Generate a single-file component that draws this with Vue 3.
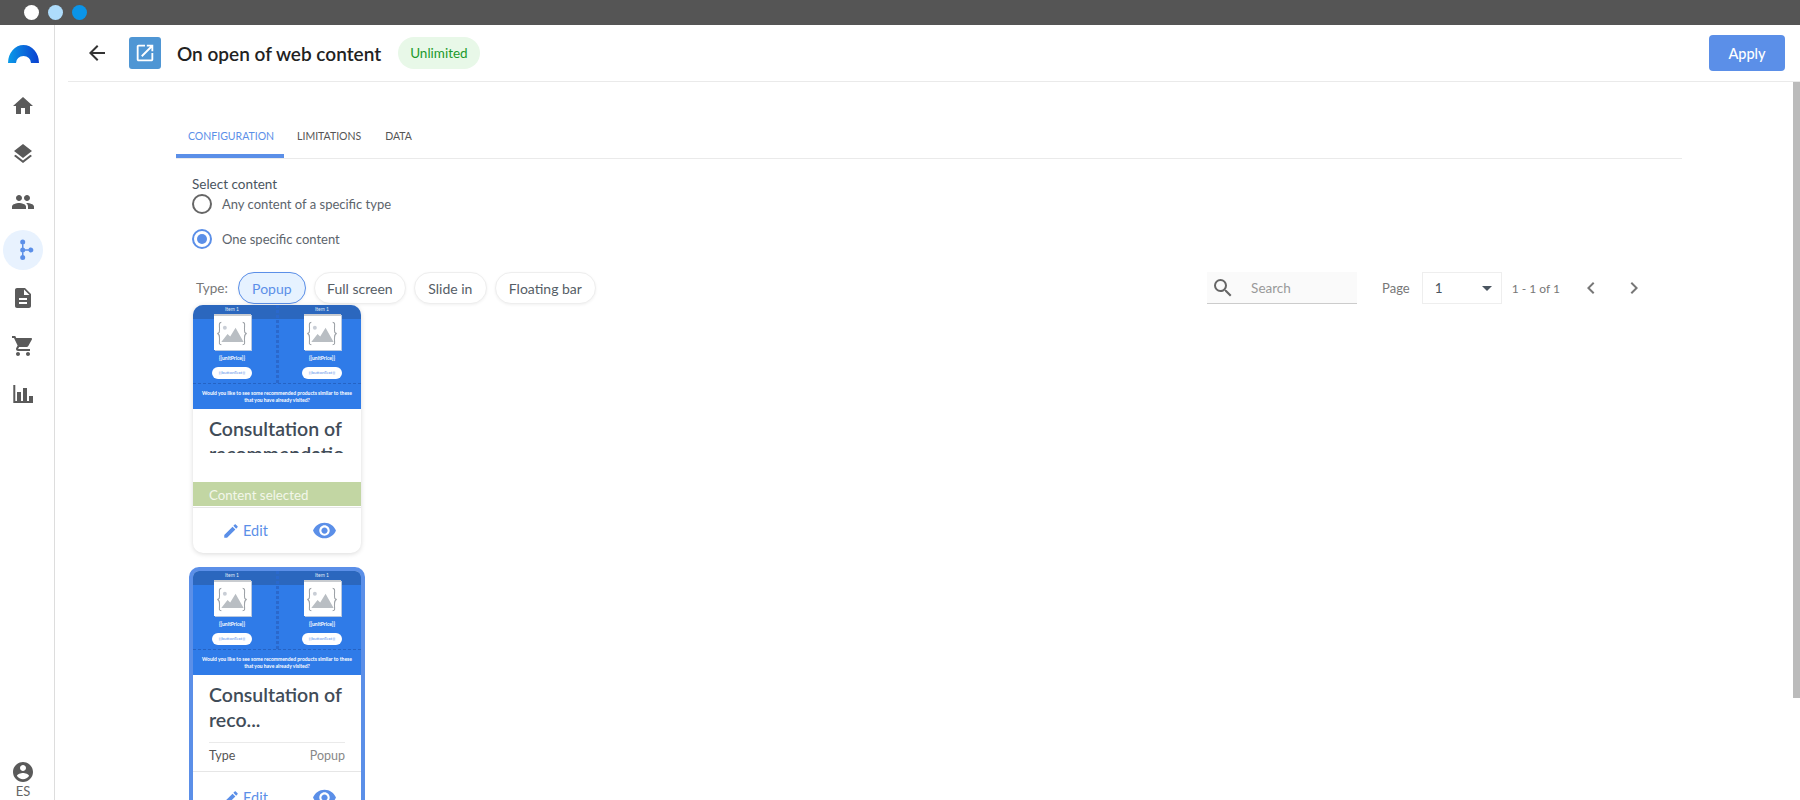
<script setup>
import { ref } from "vue";

const navItems = ref([
  { id: "home", d: "M10 20v-6h4v6h5v-8h3L12 3 2 12h3v8z" },
  { id: "layers", d: "M11.99 18.54l-7.37-5.73L3 14.07l9 7 9-7-1.63-1.27-7.38 5.74zM12 16l7.36-5.73L21 9l-9-7-9 7 1.63 1.27L12 16z" },
  { id: "people", d: "M16 11c1.66 0 2.99-1.34 2.99-3S17.66 5 16 5c-1.66 0-3 1.34-3 3s1.34 3 3 3zm-8 0c1.66 0 2.99-1.34 2.99-3S9.66 5 8 5C6.34 5 5 6.34 5 8s1.34 3 3 3zm0 2c-2.33 0-7 1.17-7 3.5V19h14v-2.5c0-2.33-4.67-3.5-7-3.5zm8 0c-.29 0-.62.02-.97.05 1.16.84 1.97 1.97 1.97 3.45V19h6v-2.5c0-2.33-4.67-3.5-7-3.5z" },
  { id: "flow", active: true, d: "M11 4h1.500v7.200h5a2.500 2.500 0 1 1 0 1.600h-5V19H11zM11.700 1.500a2.500 2.500 0 1 1 0 5 2.500 2.500 0 0 1 0-5zM11.700 9.500a2.500 2.500 0 1 1 0 5 2.500 2.500 0 0 1 0-5zM11.700 17a2.500 2.500 0 1 1 0 5 2.500 2.500 0 0 1 0-5z" },
  { id: "doc", d: "M14 2H6c-1.1 0-1.99.9-1.99 2L4 20c0 1.1.89 2 1.99 2H18c1.1 0 2-.9 2-2V8l-6-6zm2 16H8v-2h8v2zm0-4H8v-2h8v2zm-3-5V3.5L18.5 9H13z" },
  { id: "cart", d: "M7 18c-1.1 0-1.99.9-1.99 2S5.9 22 7 22s2-.9 2-2-.9-2-2-2zM1 2v2h2l3.6 7.59-1.35 2.45c-.16.28-.25.61-.25.96 0 1.1.9 2 2 2h12v-2H7.42c-.14 0-.25-.11-.25-.25l.03-.12.9-1.63h7.45c.75 0 1.41-.41 1.75-1.03l3.58-6.49c.08-.14.12-.31.12-.48 0-.55-.45-1-1-1H5.21l-.94-2H1zm16 16c-1.1 0-1.99.9-1.99 2s.89 2 1.99 2 2-.9 2-2-.9-2-2-2z" },
  { id: "chart", d: "M2.300 3h2v16H6v-9h4v9h2V6h4v13h2v-5h4v7H2.300z" },
]);

const tabs = ["CONFIGURATION", "LIMITATIONS", "DATA"];
const types = ["Popup", "Full screen", "Slide in", "Floating bar"];
const selectedType = ref("Popup");
const selectedMode = ref("one");

const cards = ref([
  { id: 1, selected: false, clipped: true, title: "Consultation of recommendations" },
  { id: 2, selected: true, clipped: false, title: "Consultation of reco..." },
]);
</script>

<template>
  <div class="page">
    <div class="window-bar">
      <span class="dot white"></span>
      <span class="dot light"></span>
      <span class="dot blue"></span>
    </div>

    <div class="layout">
      <aside class="sidebar">
        <svg class="logo" viewBox="0 0 31 18" width="31" height="18">
          <defs>
            <linearGradient id="logoGrad" x1="0" x2="1" y1="0" y2="0">
              <stop offset="0" stop-color="#0a9be8" />
              <stop offset="1" stop-color="#0b3fd0" />
            </linearGradient>
          </defs>
          <path d="M0 18A15.500 18 0 0 1 31 18H23A7.500 7 0 0 0 8 18z" fill="url(#logoGrad)" />
        </svg>
        <div v-for="item in navItems" :key="item.id" class="nav-item">
          <span class="nav-icon" :class="{ active: item.active }">
            <svg viewBox="0 0 24 24" width="24" height="24"><path :d="item.d" /></svg>
          </span>
        </div>
        <div class="profile">
          <svg viewBox="0 0 24 24" width="24" height="24">
            <path d="M12 2C6.480 2 2 6.480 2 12s4.480 10 10 10 10-4.480 10-10S17.520 2 12 2zm0 3c1.660 0 3 1.340 3 3s-1.340 3-3 3-3-1.340-3-3 1.340-3 3-3zm0 14.200c-2.500 0-4.710-1.280-6-3.220.03-1.990 4-3.080 6-3.080 1.990 0 5.970 1.090 6 3.080-1.290 1.940-3.500 3.220-6 3.220z" />
          </svg>
          <span>ES</span>
        </div>
      </aside>

      <main class="main">
        <header class="top-header">
          <svg class="back" viewBox="0 0 24 24" width="24" height="24">
            <path d="M20 11H7.830l5.590-5.590L12 4l-8 8 8 8 1.410-1.410L7.830 13H20v-2z" />
          </svg>
          <span class="type-icon">
            <svg viewBox="0 0 24 24" width="22" height="22">
              <path d="M19 19H5V5h7V3H5c-1.110 0-2 .9-2 2v14c0 1.100.89 2 2 2h14c1.100 0 2-.9 2-2v-7h-2v7zM14 3v2h3.590l-9.830 9.830 1.410 1.410L19 6.410V10h2V3h-7z" />
            </svg>
          </span>
          <h1>On open of web content</h1>
          <span class="badge">Unlimited</span>
          <button class="apply">Apply</button>
        </header>

        <div class="scrollbar"></div>

        <section class="content">
          <nav class="tabs">
            <a v-for="(tab, i) in tabs" :key="tab" class="tab" :class="{ active: i === 0 }">{{ tab }}</a>
          </nav>

          <div class="select-box">
            <div class="select-title">Select content</div>
            <label class="radio-row first" @click="selectedMode = 'any'">
              <span class="radio" :class="{ on: selectedMode === 'any' }"></span>
              Any content of a specific type
            </label>
            <label class="radio-row" @click="selectedMode = 'one'">
              <span class="radio" :class="{ on: selectedMode === 'one' }"></span>
              One specific content
            </label>
          </div>

          <div class="filters">
            <span class="type-label">Type:</span>
            <button
              v-for="t in types"
              :key="t"
              class="chip"
              :class="{ active: selectedType === t }"
              @click="selectedType = t"
            >
              {{ t }}
            </button>

            <div class="search">
              <svg viewBox="0 0 24 24" width="24" height="24">
                <path d="M15.500 14h-.79l-.28-.27A6.470 6.470 0 0 0 16 9.500 6.500 6.500 0 1 0 9.500 16c1.610 0 3.090-.59 4.230-1.570l.27.28v.79l5 4.990L20.490 19l-4.990-5zm-6 0C7.010 14 5 11.990 5 9.500S7.010 5 9.500 5 14 7.010 14 9.500 11.990 14 9.500 14z" />
              </svg>
              <span>Search</span>
            </div>
            <span class="page-label">Page</span>
            <div class="page-select"><span>1</span><i class="caret"></i></div>
            <span class="page-count">1 - 1 of 1</span>
            <svg class="chev left" viewBox="0 0 24 24" width="24" height="24">
              <path d="M15.410 7.410 14 6l-6 6 6 6 1.410-1.410L10.830 12z" />
            </svg>
            <svg class="chev" viewBox="0 0 24 24" width="24" height="24">
              <path d="M10 6 8.590 7.410 13.170 12l-4.580 4.590L10 18l6-6z" />
            </svg>
          </div>

          <div class="card-list">
            <article v-for="card in cards" :key="card.id" class="card" :class="{ selected: card.selected }">
              <div class="thumb">
                <div class="thumb-strip"></div>
                <div class="thumb-items">
                  <div v-for="n in 2" :key="n" class="thumb-item">
                    <div class="thumb-label">Item 1</div>
                    <div class="thumb-img">
                      <svg viewBox="0 0 38 37" width="36" height="33">
                        <path d="M7 6C4 6 5 9 5 13s0 5-2.500 5.500C5 19 5 21 5 25s-1 6 2 6M31 6c3 0 2 3 2 7s0 5 2.500 5.500C33 19 33 21 33 25s1 6-2 6" fill="none" stroke="#9da2a7" stroke-width="1.200" />
                        <circle cx="11" cy="12" r="2.200" fill="#c9ced6" />
                        <path d="M7 28l7-9 3 3 6-10 9 16z" fill="#b9bec3" />
                      </svg>
                    </div>
                    <div class="thumb-price">{{ "{" + "{unitPrice}" + "}" }}</div>
                    <div class="thumb-btn">{{ "{" + "{buttonText}" + "}" }}</div>
                  </div>
                </div>
                <div class="thumb-text">
                  Would you like to see some recommended products similar to these that you have already visited?
                </div>
              </div>

              <div class="card-body" :class="{ clipped: card.clipped }">
                <h2>{{ card.title }}</h2>
              </div>

              <div v-if="card.selected" class="card-meta">
                <span>Type</span>
                <span class="meta-value">Popup</span>
              </div>
              <div v-else class="card-status">Content selected</div>

              <div class="card-actions">
                <a class="edit">
                  <svg viewBox="0 0 24 24" width="18" height="18">
                    <path d="M3 17.250V21h3.750L17.810 9.940l-3.750-3.750L3 17.250zM20.710 7.040c.39-.39.39-1.020 0-1.410l-2.340-2.340c-.39-.39-1.020-.39-1.410 0l-1.830 1.830 3.750 3.750 1.830-1.830z" />
                  </svg>
                  Edit
                </a>
                <svg class="eye" viewBox="0 0 24 24" width="25" height="25">
                  <path d="M12 4.500C7 4.500 2.730 7.610 1 12c1.730 4.390 6 7.500 11 7.500s9.270-3.110 11-7.500c-1.730-4.390-6-7.500-11-7.500zM12 17c-2.760 0-5-2.240-5-5s2.240-5 5-5 5 2.240 5 5-2.240 5-5 5zm0-8c-1.660 0-3 1.340-3 3s1.340 3 3 3 3-1.340 3-3-1.340-3-3-3z" />
                </svg>
              </div>
            </article>
          </div>
        </section>
      </main>
    </div>
  </div>
</template>

<style scoped>
.page {
  height: 800px;
  overflow: hidden;
  background: #fff;
  font-family: "Lato", "Noto Sans", sans-serif;
  color: #4a5560;
}

.window-bar {
  height: 25px;
  background: #555;
  display: flex;
  align-items: center;
  gap: 9px;
  padding-left: 24px;
}

.dot {
  width: 15px;
  height: 15px;
  border-radius: 50%;
}
.dot.white { background: #fff; }
.dot.light { background: #aedcfb; }
.dot.blue { background: #0a94e8; }

.layout {
  display: flex;
  height: 775px;
}

.sidebar {
  width: 46px;
  padding-right: 8px;
  border-right: 1px solid #ddd;
  flex-shrink: 0;
  display: flex;
  flex-direction: column;
  align-items: center;
  padding-top: 20px;
  box-sizing: content-box;
}

.logo {
  margin-bottom: 19px;
}

.nav-item {
  height: 48px;
  display: flex;
  align-items: center;
  justify-content: center;
}

.nav-icon {
  width: 40px;
  height: 40px;
  border-radius: 50%;
  display: flex;
  align-items: center;
  justify-content: center;
  flex-shrink: 0;
}

.nav-icon svg {
  fill: #5a5a5a;
}

.nav-icon.active {
  background: #e8f2fe;
}

.nav-icon.active svg {
  fill: #5b8fe8;
}

.profile {
  margin-top: auto;
  display: flex;
  flex-direction: column;
  align-items: center;
  padding-bottom: 2px;
  font-size: 13px;
  line-height: 14px;
  color: #666;
}

.profile svg {
  fill: #5a5a5a;
}

.main {
  flex: 1;
  min-width: 0;
  position: relative;
}

.top-header {
  height: 56px;
  margin-left: 13px;
  border-bottom: 1px solid #eaeaea;
  display: flex;
  align-items: center;
  padding-left: 17px;
}

.back {
  fill: #333;
  margin-right: 20px;
}

.type-icon {
  width: 32px;
  height: 32px;
  border-radius: 3px;
  background: #4f96d4;
  display: flex;
  align-items: center;
  justify-content: center;
}

.type-icon svg {
  fill: #fff;
}

.top-header h1 {
  margin: 0 17px 0 16px;
  font-size: 19px;
  font-weight: 600;
  color: #222;
}

.badge {
  height: 32px;
  line-height: 32px;
  padding: 0 12px;
  border-radius: 16px;
  background: #e8f8e8;
  color: #1c9a2c;
  font-size: 13.500px;
}

.apply {
  margin-left: auto;
  margin-right: 15px;
  width: 76px;
  height: 36px;
  border: none;
  border-radius: 4px;
  background: #5b8fe8;
  color: #fff;
  font-family: inherit;
  font-size: 14.500px;
  font-weight: 500;
}

.scrollbar {
  position: absolute;
  top: 57px;
  right: 0;
  width: 7px;
  height: 616px;
  background: #bbb;
}

.content {
  padding: 40px 118px 0 121px;
}

.tabs {
  display: flex;
  height: 36px;
  border-bottom: 1px solid #eaeaea;
  box-sizing: content-box;
}

.tab {
  padding: 7px 12px 0;
  font-size: 10.500px;
  line-height: 15px;
  color: #555;
  box-sizing: border-box;
  height: 36px;
}

.tab.active {
  color: #5b8fe8;
  padding-right: 10px;
  border-bottom: 4px solid #5b8fe8;
  border-radius: 3px 3px 0 0;
  margin-right: 1px;
}

.select-box {
  padding: 16px 0 0 16px;
}

.select-title {
  font-size: 13.500px;
  line-height: 18px;
  color: #4a5560;
}

.radio-row {
  display: flex;
  align-items: center;
  gap: 10px;
  height: 20px;
  margin-top: 15px;
  font-size: 13px;
  color: #5c646c;
}

.radio-row.first {
  margin-top: 1px;
}

.radio {
  width: 20px;
  height: 20px;
  border: 2px solid #666;
  border-radius: 50%;
  box-sizing: border-box;
  display: flex;
  align-items: center;
  justify-content: center;
}

.radio.on {
  border-color: #5b8fe8;
}

.radio.on::after {
  content: "";
  width: 10px;
  height: 10px;
  border-radius: 50%;
  background: #5b8fe8;
}

.filters {
  display: flex;
  align-items: center;
  height: 32px;
  margin-top: 23px;
  padding: 0 36px 0 20px;
}

.type-label {
  font-size: 13.500px;
  color: #777;
  margin-right: 10px;
}

.chip {
  height: 32px;
  margin-right: 8px;
  padding: 0;
  border: 1px solid #eee;
  border-radius: 16px;
  background: #fff;
  box-shadow: 0 1px 3px rgba(0, 0, 0, 0.06);
  font-family: inherit;
  font-size: 14px;
  color: #555d66;
}

.chip:nth-of-type(1) { width: 68px; }
.chip:nth-of-type(2) { width: 92px; }
.chip:nth-of-type(3) { width: 73px; }
.chip:nth-of-type(4) { width: 101px; }

.chip.active {
  background: #e6f2ff;
  border-color: #5b8fe8;
  color: #5b8fe8;
}

.search {
  margin-left: auto;
  width: 150px;
  height: 32px;
  background: #fafafa;
  border-bottom: 1px solid #ccc;
  box-sizing: border-box;
  display: flex;
  align-items: center;
  padding-left: 4px;
  font-size: 13.500px;
  color: #999;
}

.search svg {
  fill: #666;
  margin-right: 16px;
}

.page-label {
  margin-left: 25px;
  font-size: 13px;
  color: #777;
}

.page-select {
  width: 80px;
  height: 32px;
  margin-left: 12px;
  border: 1px solid #eee;
  box-sizing: border-box;
  display: flex;
  align-items: center;
  justify-content: space-between;
  padding: 0 9px 0 12px;
  font-size: 13.500px;
  color: #4a5560;
}

.caret {
  width: 0;
  height: 0;
  border-left: 5px solid transparent;
  border-right: 5px solid transparent;
  border-top: 5px solid #4a5560;
}

.page-count {
  margin-left: 10px;
  font-size: 12px;
  color: #777;
}

.chev {
  fill: #777;
}

.chev.left {
  margin-left: 19px;
  margin-right: 19px;
}

.card-list {
  display: flex;
  flex-direction: column;
  align-items: flex-start;
  gap: 14px;
  padding-left: 17px;
  margin-top: 1px;
}

.card {
  width: 168px;
  border-radius: 10px;
  background: #fff;
  box-shadow: 0 1px 5px rgba(0, 0, 0, 0.15);
  overflow: hidden;
  flex-shrink: 0;
}

.card.selected {
  width: 176px;
  border: 4px solid #5b8fe8;
  margin-left: -4px;
  box-sizing: border-box;
  box-shadow: none;
}

.thumb {
  position: relative;
  height: 104px;
  background: #2f7be8;
  display: flex;
  flex-direction: column;
  align-items: center;
}

.thumb-strip {
  position: absolute;
  top: 0;
  left: 0;
  right: 0;
  height: 14px;
  background: rgba(40, 80, 140, 0.45);
}

.thumb-items {
  position: relative;
  display: grid;
  grid-template-columns: 78px 78px;
  column-gap: 12px;
  width: 100%;
  height: 78px;
  border-bottom: 1px dashed #2563c4;
  box-sizing: content-box;
  background: repeating-linear-gradient(#2a68cc 0 3px, transparent 3px 5px) center / 3px 100% no-repeat;
}

.thumb-item {
  display: flex;
  flex-direction: column;
  align-items: center;
}

.thumb-label {
  font-size: 5px;
  line-height: 9px;
  height: 9px;
  color: #dfe8f5;
  text-align: center;
  position: relative;
}

.thumb-img {
  width: 37px;
  height: 36px;
  background: #fff;
  border-top: 2px solid #c9ccd0;
  box-sizing: border-box;
  display: flex;
  align-items: center;
  justify-content: center;
  box-shadow: 1px 1px 0 #b8c8e0;
  position: relative;
}

.thumb-price {
  margin-top: 4px;
  font-size: 5px;
  line-height: 8px;
  font-weight: 700;
  color: #fff;
  position: relative;
}

.thumb-btn {
  margin-top: 5px;
  width: 40px;
  height: 12px;
  border-radius: 6px;
  background: #fff;
  color: #5b8fe8;
  font-size: 4.500px;
  line-height: 12px;
  text-align: center;
}

.thumb-text {
  padding: 6px 8px 0;
  font-size: 5px;
  line-height: 7px;
  font-weight: 700;
  color: #fff;
  text-align: center;
}

.card-body {
  padding: 7px 16px 0;
}

.card-body h2 {
  margin: 0;
  font-size: 19.500px;
  line-height: 25px;
  font-weight: 600;
  color: #414c58;
  overflow-wrap: anywhere;
}

.card-body.clipped {
  height: 73px;
  box-sizing: border-box;
}

.card-body.clipped h2 {
  height: 37px;
  overflow: hidden;
}

.card-status {
  height: 24px;
  padding-left: 16px;
  background: #c2d6a3;
  border-bottom: 1px solid #fff;
  color: #f3f7ea;
  font-size: 13.300px;
  line-height: 26px;
  overflow: hidden;
}

.card-meta {
  margin: 10px 16px 0;
  padding-bottom: 4px;
  box-sizing: border-box;
  border-top: 1px solid #eaeaea;
  height: 29px;
  display: flex;
  justify-content: space-between;
  align-items: center;
  font-size: 12.500px;
  color: #555;
}

.meta-value {
  color: #888;
}

.card-actions {
  height: 46px;
  box-sizing: border-box;
  border-top: 1px solid #e6e6e6;
  display: flex;
  align-items: center;
  justify-content: space-between;
  padding: 0 24px 0 29px;
}

.card.selected .card-actions {
  height: 52px;
}

.edit {
  display: flex;
  align-items: center;
  gap: 3px;
  font-size: 14.500px;
  color: #5b8fe8;
}

.edit svg,
.eye {
  fill: #5b8fe8;
}
</style>
